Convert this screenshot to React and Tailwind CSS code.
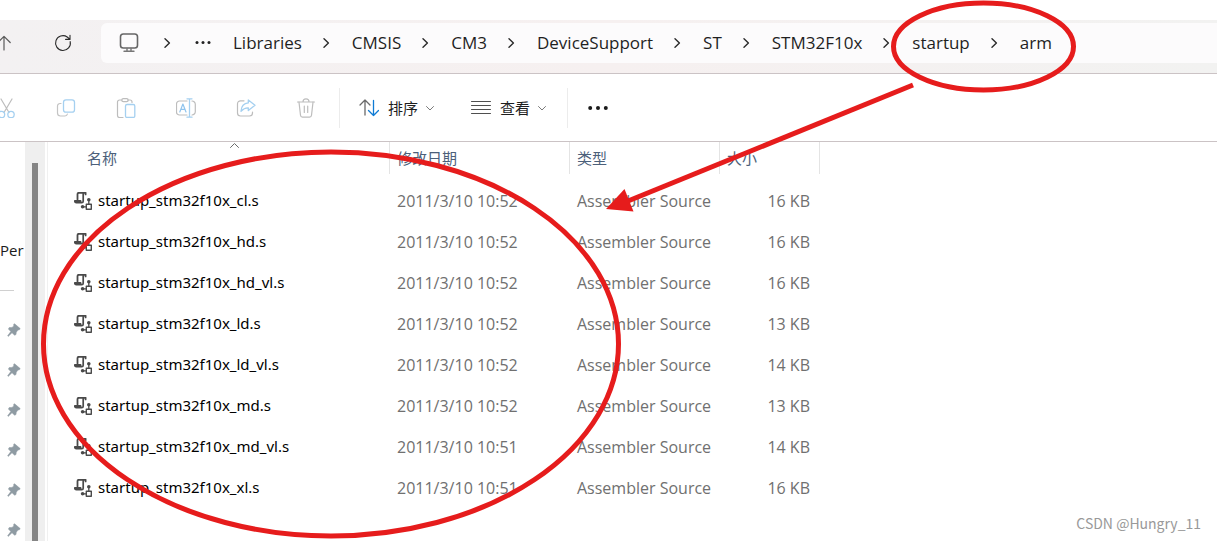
const crumbs = ["Libraries", "CMSIS", "CM3", "DeviceSupport", "ST", "STM32F10x", "startup", "arm"];

const files = [
    { name: "startup_stm32f10x_cl.s", modified: "2011/3/10 10:52", type: "Assembler Source", size: "16 KB" },
    { name: "startup_stm32f10x_hd.s", modified: "2011/3/10 10:52", type: "Assembler Source", size: "16 KB" },
    { name: "startup_stm32f10x_hd_vl.s", modified: "2011/3/10 10:52", type: "Assembler Source", size: "16 KB" },
    { name: "startup_stm32f10x_ld.s", modified: "2011/3/10 10:52", type: "Assembler Source", size: "13 KB" },
    { name: "startup_stm32f10x_ld_vl.s", modified: "2011/3/10 10:52", type: "Assembler Source", size: "14 KB" },
    { name: "startup_stm32f10x_md.s", modified: "2011/3/10 10:52", type: "Assembler Source", size: "13 KB" },
    { name: "startup_stm32f10x_md_vl.s", modified: "2011/3/10 10:51", type: "Assembler Source", size: "14 KB" },
    { name: "startup_stm32f10x_xl.s", modified: "2011/3/10 10:51", type: "Assembler Source", size: "16 KB" },
];

const pins = [1, 2, 3, 4, 5, 6];

function Icon({ size = 20, className = "", children }) {
    return (
        <svg
            width={size}
            height={size}
            viewBox={`0 0 ${size} ${size}`}
            fill="none"
            strokeLinecap="round"
            strokeLinejoin="round"
            className={`shrink-0 ${className}`}
            aria-hidden="true"
        >
            {children}
        </svg>
    );
}

const CrumbChevron = () => (
    <Icon size={10} className="mx-5">
        <path d="M2 0.8 L6.4 5 L2 9.2" stroke="#2a2a2a" strokeWidth="1.4" />
    </Icon>
);

const MenuChevron = () => (
    <Icon size={8}>
        <path d="M0.5 2.5 L4 6 L7.5 2.5" stroke="#7a7a7a" strokeWidth="1" />
    </Icon>
);

const tools = [
    {
        label: "剪切",
        icon: (
            <>
                <path d="M5 1 L13 14.5 M16 1 L8 14.5" stroke="#bdbdbd" strokeWidth="1.2" />
                <circle cx="5.5" cy="16.5" r="3.2" stroke="#a5d0f0" strokeWidth="1.3" />
                <circle cx="15" cy="16.5" r="3.2" stroke="#a5d0f0" strokeWidth="1.3" />
            </>
        ),
    },
    {
        label: "复制",
        icon: (
            <>
                <path d="M5 5.5 H4 a2.5 2.5 0 0 0 -2.5 2.5 V15 a3 3 0 0 0 3 3 H9 a2.5 2.5 0 0 0 2.4 -2" stroke="#c4c4c4" strokeWidth="1.2" />
                <rect x="7.5" y="1.8" width="11" height="12.4" rx="2.5" stroke="#a5d0f0" strokeWidth="1.3" />
            </>
        ),
    },
    {
        label: "粘贴",
        icon: (
            <>
                <path d="M6 2 H3.5 a2 2 0 0 0 -2 2 V17.5 a2 2 0 0 0 2 2 H7 M11.5 2 H14 a2 2 0 0 1 2 2 V4.5" stroke="#bdbdbd" strokeWidth="1.2" />
                <rect x="5.8" y="0.7" width="6.4" height="3" rx="1.5" stroke="#bdbdbd" strokeWidth="1.2" />
                <rect x="9.5" y="6.5" width="9.3" height="13" rx="1.6" stroke="#a5d0f0" strokeWidth="1.3" />
            </>
        ),
    },
    {
        label: "重命名",
        icon: (
            <>
                <path d="M11 3 H3.5 a3 3 0 0 0 -3 3 V14 a3 3 0 0 0 3 3 H11 M16 3 a3.3 3.3 0 0 1 3.3 3.3 V13.7 a3.3 3.3 0 0 1 -3.3 3.3" stroke="#bdbdbd" strokeWidth="1.2" />
                <path d="M3.8 14 L6.9 6 L10 14 M5 11.3 H8.8" stroke="#8fc4ee" strokeWidth="1.2" />
                <path d="M13.5 0.8 V19.2 M11 0.8 H16 M11 19.2 H16" stroke="#a5d0f0" strokeWidth="1.3" />
            </>
        ),
    },
    {
        label: "共享",
        icon: (
            <>
                <path d="M8 2.8 H4.5 a3 3 0 0 0 -3 3 V15 a3 3 0 0 0 3 3 H13.5 a3 3 0 0 0 3 -3 V14" stroke="#bdbdbd" strokeWidth="1.2" />
                <path d="M12.3 2 L19 7.3 L12.3 12.6 V9.8 C9 9.6 7 11 5 13.2 C5.3 8.8 7.8 5.2 12.3 4.9 Z" stroke="#a5d0f0" strokeWidth="1.3" />
            </>
        ),
    },
    {
        label: "删除",
        icon: (
            <>
                <path d="M1.5 4 H18.5 M7 3.8 a3 3 0 0 1 6 0" stroke="#bdbdbd" strokeWidth="1.2" />
                <path d="M3 4.2 L4.5 17.3 a2 2 0 0 0 2 1.8 H13.5 a2 2 0 0 0 2 -1.8 L17 4.2 M8.3 8 V14.5 M11.7 8 V14.5" stroke="#bdbdbd" strokeWidth="1.2" />
            </>
        ),
    },
];

function AddressBar() {
    return (
        <header className="mt-5 flex h-[54px] shrink-0 items-start gap-[18px] border-b border-[#cbc3c5] bg-linear-to-r from-[#f3f1f2] via-[#f6f0f0] to-[#f2f2f1] pt-[3px]">
            <button className="-ml-[15px] flex h-10 w-10 shrink-0 items-center justify-center" aria-label="向上">
                <Icon size={16}>
                    <path d="M7 15 V1.5 M0.8 7.5 L7 1.3 L13.2 7.5" stroke="#5a5a5a" strokeWidth="1.2" />
                </Icon>
            </button>
            <button className="flex h-10 w-10 shrink-0 items-center justify-center" aria-label="刷新">
                <Icon size={18}>
                    <path d="M16.2 7.5 A7.4 7.4 0 1 1 13.2 3 L15.8 5.2 M16 1.2 V5.4 H11.6" stroke="#2a2a2a" strokeWidth="1.1" />
                </Icon>
            </button>
            <nav className="flex h-10 flex-1 items-center rounded-l-md bg-[#fcfbfc] pl-[18px] text-[17px] text-[#1f1f1f]">
                <button aria-label="此电脑">
                    <Icon size={20}>
                        <rect x="1.5" y="1" width="17" height="14" rx="2.8" stroke="#666666" strokeWidth="1.6" />
                        <path d="M8 15.5 V17.5 M12 15.5 V17.5 M5 18.3 H15" stroke="#777777" strokeWidth="1.4" />
                    </Icon>
                </button>
                <Icon size={10} className="ml-6 mr-[22px]">
                    <path d="M2 0.8 L6.4 5 L2 9.2" stroke="#2a2a2a" strokeWidth="1.4" />
                </Icon>
                <button className="mr-[22px]" aria-label="更多路径">
                    <Icon size={16}>
                        <circle cx="2" cy="7.5" r="1.5" fill="#222222" />
                        <circle cx="8" cy="7.5" r="1.5" fill="#222222" />
                        <circle cx="14" cy="7.5" r="1.5" fill="#222222" />
                    </Icon>
                </button>
                {crumbs.map((crumb, i) => (
                    <div key={crumb} className="flex shrink-0 items-center">
                        {i > 0 && <CrumbChevron />}
                        <a href="#">{crumb}</a>
                    </div>
                ))}
            </nav>
        </header>
    );
}

function Toolbar() {
    return (
        <div className="flex h-[68px] shrink-0 items-center border-b border-[#cbc3c5] text-[15px] text-[#1f1f1f]">
            <div className="-ml-6 mr-[3px] flex">
                {tools.map((tool) => (
                    <button key={tool.label} className="flex h-10 w-[60px] items-center justify-center" aria-label={tool.label}>
                        <Icon>{tool.icon}</Icon>
                    </button>
                ))}
            </div>
            <div className="flex h-10 items-center gap-[37px] border-x border-[#ececec] pl-[19px] pr-[21px]">
                <button className="flex items-center gap-2">
                    <Icon>
                        <path d="M6 17 V2 M1 7 L6 2 L11 7" stroke="#6a6a6a" strokeWidth="1.3" />
                        <path d="M14.5 2.5 V17.5 M9.5 12.5 L14.5 17.5 L19.5 12.5" stroke="#0f7bd4" strokeWidth="1.3" />
                    </Icon>
                    <span className="pt-px pl-px">排序</span>
                    <MenuChevron />
                </button>
                <button className="flex items-center gap-2">
                    <Icon>
                        <path d="M0.5 3.5 H19.5 M0.5 7.5 H19.5 M0.5 11.5 H19.5 M0.5 15.5 H19.5" stroke="#4f4f4f" strokeWidth="1" />
                    </Icon>
                    <span className="pt-px pl-px">查看</span>
                    <MenuChevron />
                </button>
            </div>
            <button className="ml-5" aria-label="更多">
                <Icon>
                    <circle cx="2.2" cy="10" r="2" fill="#1a1a1a" />
                    <circle cx="10" cy="10" r="2" fill="#1a1a1a" />
                    <circle cx="17.8" cy="10" r="2" fill="#1a1a1a" />
                </Icon>
            </button>
        </div>
    );
}

function Sidebar() {
    return (
        <aside className="flex w-12 shrink-0 border-r border-[#f0f0f0]">
            <div className="flex w-[25px] flex-col overflow-hidden pt-24">
                <span className="h-6 text-[15px] leading-6 text-[#1b1b1b]">Per</span>
                <hr className="mt-[28px] w-[14px] border-[#d0d0d0]" />
                <ul className="mt-[19px]">
                    {pins.map((pin) => (
                        <li key={pin} className="flex h-10 items-center pl-[7px]">
                            <Icon size={14}>
                                <path d="M7.6 0.8 L13.2 5.6 L12.4 6.8 L11 7 L9.3 9.2 L9 11.6 L7.6 12.2 L5 9.8 L1.2 13.4 L0.6 12.8 L3.8 8.6 L1.4 6 L2.2 4.6 L5 4.4 L6.8 3 L6.7 1.5 Z" fill="#8f9ba3" stroke="#8f9ba3" strokeWidth="0.5" />
                            </Icon>
                        </li>
                    ))}
                </ul>
            </div>
            <div className="w-5 bg-[#efefef] px-[7px] pt-[21px]">
                <div className="h-full bg-[#858585]" />
            </div>
        </aside>
    );
}

function FileIcon() {
    return (
        <Icon size={18}>
            <path d="M3.5 7.5 V2.2 a1.4 1.4 0 0 1 1.4 -1.4 H11.6 V2.4" stroke="#4a4a4a" strokeWidth="1.8" />
            <path d="M9.2 1.5 V9.2 a1.5 1.5 0 0 1 -1.5 1.5 H2.4 a1.6 1.6 0 0 1 -1.6 -1.8 H6.6 V10" stroke="#4a4a4a" strokeWidth="1.7" />
            <circle cx="14.8" cy="7.8" r="1.8" fill="#4a4a4a" />
            <circle cx="8.6" cy="14.8" r="1.8" fill="#4a4a4a" />
            <path d="M14.8 8 V12.2 M8.6 14.8 H12" stroke="#4a4a4a" strokeWidth="1.3" />
            <rect x="12.3" y="12.2" width="5" height="5" fill="#ffffff" stroke="#4a4a4a" strokeWidth="1.4" />
        </Icon>
    );
}

function FileTable() {
    return (
        <main className="min-w-0 flex-1 overflow-hidden">
            <table className="w-[772px] table-fixed border-collapse text-left text-[15px] text-[#707070]">
                <colgroup>
                    <col className="w-[342px]" />
                    <col className="w-[180px]" />
                    <col className="w-[150px]" />
                    <col className="w-[100px]" />
                </colgroup>
                <thead>
                    <tr className="h-[38px] align-top text-[#4c607a]">
                        <th className="relative p-0 font-normal">
                            <div className="h-8 border-r border-[#e4e4e4] pl-[39px] leading-8">名称</div>
                            <Icon size={10} className="absolute left-[182px] top-0">
                                <path d="M0.5 5.5 L4.5 1.5 L8.5 5.5" stroke="#6a6a6a" strokeWidth="1" />
                            </Icon>
                        </th>
                        <th className="p-0 font-normal">
                            <div className="h-8 border-r border-[#e4e4e4] pl-[7px] leading-8">修改日期</div>
                        </th>
                        <th className="p-0 font-normal">
                            <div className="h-8 border-r border-[#e4e4e4] pl-[7px] leading-8">类型</div>
                        </th>
                        <th className="p-0 font-normal">
                            <div className="h-8 border-r border-[#e4e4e4] pl-[7px] leading-8">大小</div>
                        </th>
                    </tr>
                </thead>
                <tbody className="text-base">
                    {files.map((file) => (
                        <tr key={file.name} className="h-[41px]">
                            <td className="p-0">
                                <div className="flex items-center gap-[6px] pl-[26px] font-['Noto_Sans',sans-serif] text-[15px] text-black">
                                    <FileIcon />
                                    {file.name}
                                </div>
                            </td>
                            <td className="p-0 pl-[7px]">{file.modified}</td>
                            <td className="p-0 pl-[7px]">{file.type}</td>
                            <td className="p-0 pr-[10px] text-right">{file.size}</td>
                        </tr>
                    ))}
                </tbody>
            </table>
        </main>
    );
}

// Hand-drawn marks that sit over the window
function Annotations() {
    return (
        <svg
            width="1217"
            height="541"
            viewBox="0 0 1217 541"
            fill="none"
            className="pointer-events-none absolute left-0 top-0"
            aria-hidden="true"
        >
            <ellipse cx="983.5" cy="46.5" rx="90" ry="43.5" stroke="#e61c1c" strokeWidth="5" />
            <ellipse cx="331" cy="344" rx="287.5" ry="192" stroke="#e61c1c" strokeWidth="5" />
            <path d="M913 85 L628 201" stroke="#e61c1c" strokeWidth="5" />
            <path d="M606 209 L624.5 189 L633.5 211.5 Z" fill="#e61c1c" />
        </svg>
    );
}

export default function App() {
    return (
        <div className="relative flex h-screen flex-col overflow-hidden bg-white font-['Open_Sans','Noto_Sans_CJK_SC',sans-serif]">
            <AddressBar />
            <Toolbar />
            <div className="flex min-h-0 flex-1">
                <Sidebar />
                <FileTable />
            </div>
            <Annotations />
            <span className="absolute bottom-2 right-4 font-['Noto_Sans_CJK_SC',sans-serif] text-[14px] leading-5 text-[#999999]">
                CSDN @Hungry_11
            </span>
        </div>
    );
}
